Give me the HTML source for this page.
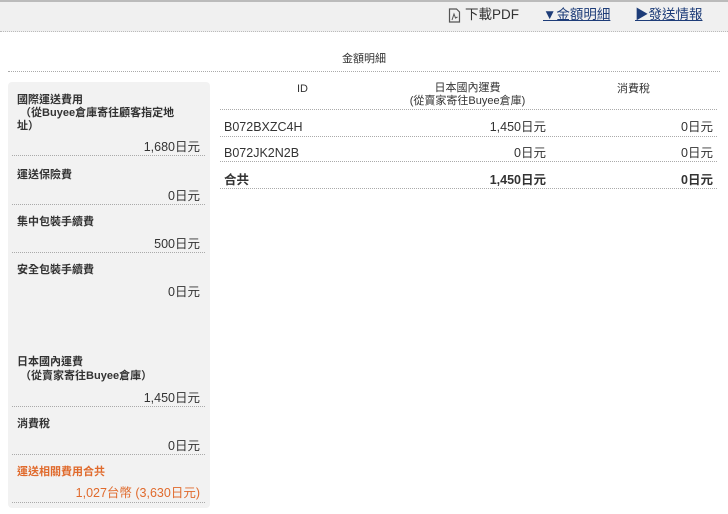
<!DOCTYPE html>
<html><head><meta charset="utf-8"><style>
*{margin:0;padding:0;box-sizing:border-box}
body{width:728px;height:514px;background:#fff;font-family:"Liberation Sans","Noto Sans CJK TC",sans-serif;font-size:12.5px;color:#333;position:relative;overflow:hidden}
.a{position:absolute;white-space:nowrap;line-height:14px}
.top{position:absolute;left:0;top:0;width:728px;height:32px;background:#f0f0f0;border-top:2px solid #bbb;border-bottom:1px dotted #bbb}
.lnk{color:#1d3c78;text-decoration:underline;font-size:13.5px}
.dl{position:absolute;height:0;border-top:1px dotted #aaa}
.panel{position:absolute;left:8px;top:82px;width:202px;height:426px;background:#f2f2f2;border-radius:4px}
.b{font-weight:bold}
.r{text-align:right}
.or{color:#e06a2c}
</style></head><body>
<div class="top"></div>
<svg class="a" style="left:448px;top:8px" width="13" height="15" viewBox="0 0 13 15"><path d="M1.5 1h7l3 3v10h-10z" fill="none" stroke="#555" stroke-width="1.2"/><path d="M4 12l2-6 1.5 4 2-1" fill="none" stroke="#555" stroke-width="1"/></svg>
<div class="a" style="left:465px;top:8px;font-size:13.5px;color:#333">下載PDF</div>
<div class="a lnk" style="left:543px;top:8px">▼金額明細</div>
<div class="a lnk" style="left:635px;top:8px">▶發送情報</div>

<div class="a" style="left:342px;top:52px;font-size:11px">金額明細</div>
<div class="dl" style="left:8px;top:71px;width:712px"></div>

<div class="panel"></div>
<div class="a b" style="left:17px;top:94px;line-height:13px;font-size:11px">國際運送費用<br>&nbsp;（從Buyee倉庫寄往顧客指定地<br>址）</div>
<div class="a r" style="left:17px;width:183px;top:140px">1,680日元</div>
<div class="dl" style="left:12px;top:155px;width:193px"></div>
<div class="a b" style="left:17px;top:168px;font-size:11px">運送保險費</div>
<div class="a r" style="left:17px;width:183px;top:189px">0日元</div>
<div class="dl" style="left:12px;top:204px;width:193px"></div>
<div class="a b" style="left:17px;top:215px;font-size:11px">集中包裝手續費</div>
<div class="a r" style="left:17px;width:183px;top:237px">500日元</div>
<div class="dl" style="left:12px;top:252px;width:193px"></div>
<div class="a b" style="left:17px;top:263px;font-size:11px">安全包裝手續費</div>
<div class="a r" style="left:17px;width:183px;top:285px">0日元</div>
<div class="a b" style="left:17px;top:355px;line-height:14px;font-size:11px">日本國內運費<br>&nbsp;（從賣家寄往Buyee倉庫）</div>
<div class="a r" style="left:17px;width:183px;top:391px">1,450日元</div>
<div class="dl" style="left:12px;top:406px;width:193px"></div>
<div class="a b" style="left:17px;top:417px;font-size:11px">消費稅</div>
<div class="a r" style="left:17px;width:183px;top:439px">0日元</div>
<div class="dl" style="left:12px;top:454px;width:193px"></div>
<div class="a b or" style="left:17px;top:465px;font-size:11px">運送相關費用合共</div>
<div class="a r or" style="left:17px;width:183px;top:486px">1,027台幣 (3,630日元)</div>
<div class="dl" style="left:12px;top:502px;width:193px"></div>

<div class="a" style="left:220px;width:165px;text-align:center;top:82px;font-size:11px">ID</div>
<div class="a" style="left:385px;width:165px;text-align:center;top:82px;line-height:13px;font-size:11px">日本國內運費<br>(從賣家寄往Buyee倉庫)</div>
<div class="a" style="left:550px;width:167px;text-align:center;top:82px;font-size:11px">消費稅</div>
<div class="dl" style="left:220px;top:109px;width:497px"></div>

<div class="a" style="left:224px;top:120px">B072BXZC4H</div>
<div class="a r" style="left:385px;width:161px;top:120px">1,450日元</div>
<div class="a r" style="left:550px;width:163px;top:120px">0日元</div>
<div class="dl" style="left:220px;top:136px;width:497px"></div>
<div class="a" style="left:224px;top:146px">B072JK2N2B</div>
<div class="a r" style="left:385px;width:161px;top:146px">0日元</div>
<div class="a r" style="left:550px;width:163px;top:146px">0日元</div>
<div class="dl" style="left:220px;top:161px;width:497px"></div>
<div class="a b" style="left:224px;top:173px">合共</div>
<div class="a r b" style="left:385px;width:161px;top:173px">1,450日元</div>
<div class="a r b" style="left:550px;width:163px;top:173px">0日元</div>
<div class="dl" style="left:220px;top:188px;width:497px"></div>
</body></html>
